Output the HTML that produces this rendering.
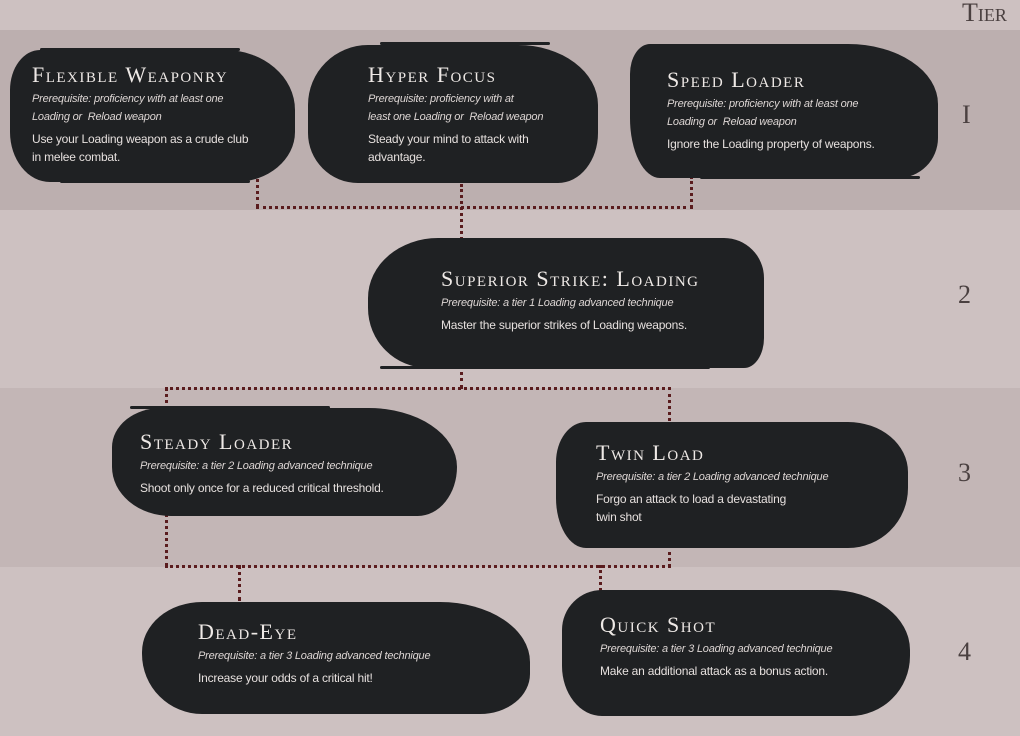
<!DOCTYPE html>
<html><head><meta charset="utf-8"><style>
*{margin:0;padding:0;box-sizing:border-box}
body{width:1020px;height:736px;overflow:hidden;background:#cdc1c1;position:relative;font-family:"Liberation Sans",sans-serif}
.band{position:absolute;left:0;width:1020px;background:rgba(120,105,105,.2)}
.blob{position:absolute;background:#1f2123;}
.t{position:absolute;color:#f1ecea;white-space:nowrap}
.h{font-family:"Liberation Serif",serif;font-variant:small-caps;font-size:22px;letter-spacing:1.5px;white-space:nowrap;color:#eee9e6}
.p{font-style:italic;font-size:11px;line-height:18px;color:#ddd6d4;letter-spacing:-0.2px}
.d{font-size:12px;line-height:18px;margin-top:4px;color:#e6e0de;letter-spacing:-0.2px}
.dv{position:absolute;border-left:3px dotted #5a1c1e;width:0}
.dh{position:absolute;border-top:3px dotted #5a1c1e;height:0}
.tier{position:absolute;font-family:"Liberation Serif",serif;color:#4a4040;font-size:26px;font-variant:small-caps}
.strk{position:absolute;background:#1f2123;height:3px;border-radius:2px}
</style></head><body>
<div class="band" style="top:30px;height:180px"></div>
<div class="band" style="top:388px;height:179px;background:rgba(120,105,105,.12)"></div>
<div class="tier" style="left:962px;top:-2px">Tier</div>
<div class="tier" style="left:962px;top:100px">I</div>
<div class="tier" style="left:958px;top:280px">2</div>
<div class="tier" style="left:958px;top:458px">3</div>
<div class="tier" style="left:958px;top:637px">4</div>

<div class="dv" style="left:256px;top:160px;height:48px"></div>
<div class="dh" style="left:256px;top:206px;width:437px"></div>
<div class="dv" style="left:690px;top:176px;height:32px"></div>
<div class="dv" style="left:460px;top:184px;height:56px"></div>
<div class="dv" style="left:460px;top:365px;height:24px"></div>
<div class="dh" style="left:165px;top:387px;width:506px"></div>
<div class="dv" style="left:165px;top:387px;height:180px"></div>
<div class="dv" style="left:668px;top:387px;height:40px"></div>
<div class="dv" style="left:668px;top:545px;height:22px"></div>
<div class="dh" style="left:165px;top:565px;width:506px"></div>
<div class="dv" style="left:238px;top:565px;height:36px"></div>
<div class="dv" style="left:599px;top:565px;height:26px"></div>

<div class="blob" style="left:10px;top:50px;width:285px;height:132px;border-radius:30px 70px 60px 40px/40px 60px 50px 50px"></div>
<div class="strk" style="left:40px;top:48px;width:200px"></div><div class="strk" style="left:60px;top:180px;width:190px"></div>
<div class="blob" style="left:308px;top:45px;width:290px;height:138px;border-radius:60px 80px 40px 50px/60px 60px 50px 50px"></div>
<div class="strk" style="left:380px;top:42px;width:170px"></div>
<div class="blob" style="left:630px;top:44px;width:308px;height:134px;border-radius:20px 90px 40px 30px/30px 60px 40px 60px"></div>
<div class="strk" style="left:700px;top:176px;width:220px"></div>
<div class="blob" style="left:368px;top:238px;width:396px;height:130px;border-radius:70px 40px 20px 60px/60px 40px 30px 60px"></div>
<div class="strk" style="left:380px;top:366px;width:330px"></div>
<div class="blob" style="left:112px;top:408px;width:345px;height:108px;border-radius:50px 90px 40px 60px/40px 60px 50px 50px"></div>
<div class="strk" style="left:130px;top:406px;width:200px"></div>
<div class="blob" style="left:556px;top:422px;width:352px;height:126px;border-radius:30px 60px 60px 30px/40px 50px 60px 50px"></div>
<div class="blob" style="left:142px;top:602px;width:388px;height:112px;border-radius:60px 90px 50px 60px/50px 60px 40px 60px"></div>
<div class="blob" style="left:562px;top:590px;width:348px;height:126px;border-radius:40px 80px 60px 40px/40px 60px 60px 50px"></div>

<div class="t" style="left:32px;top:62px"><div class="h">Flexible Weaponry</div><div class="p" style="margin-top:2px">Prerequisite: proficiency with at least one<br>Loading or &nbsp;Reload weapon</div><div class="d">Use your Loading weapon as a crude club<br>in melee combat.</div></div>
<div class="t" style="left:368px;top:62px"><div class="h">Hyper Focus</div><div class="p" style="margin-top:2px">Prerequisite: proficiency with at<br>least one Loading or &nbsp;Reload weapon</div><div class="d">Steady your mind to attack with<br>advantage.</div></div>
<div class="t" style="left:667px;top:67px"><div class="h">Speed Loader</div><div class="p" style="margin-top:2px">Prerequisite: proficiency with at least one<br>Loading or &nbsp;Reload weapon</div><div class="d">Ignore the Loading property of weapons.</div></div>
<div class="t" style="left:441px;top:266px"><div class="h">Superior Strike: Loading</div><div class="p" style="margin-top:2px">Prerequisite: a tier 1 Loading advanced technique</div><div class="d">Master the superior strikes of Loading weapons.</div></div>
<div class="t" style="left:140px;top:429px"><div class="h">Steady Loader</div><div class="p" style="margin-top:2px">Prerequisite: a tier 2 Loading advanced technique</div><div class="d">Shoot only once for a reduced critical threshold.</div></div>
<div class="t" style="left:596px;top:440px"><div class="h">Twin Load</div><div class="p" style="margin-top:2px">Prerequisite: a tier 2 Loading advanced technique</div><div class="d">Forgo an attack to load a devastating<br>twin shot</div></div>
<div class="t" style="left:198px;top:619px"><div class="h">Dead-Eye</div><div class="p" style="margin-top:2px">Prerequisite: a tier 3 Loading advanced technique</div><div class="d">Increase your odds of a critical hit!</div></div>
<div class="t" style="left:600px;top:612px"><div class="h">Quick Shot</div><div class="p" style="margin-top:2px">Prerequisite: a tier 3 Loading advanced technique</div><div class="d">Make an additional attack as a bonus action.</div></div>
</body></html>
